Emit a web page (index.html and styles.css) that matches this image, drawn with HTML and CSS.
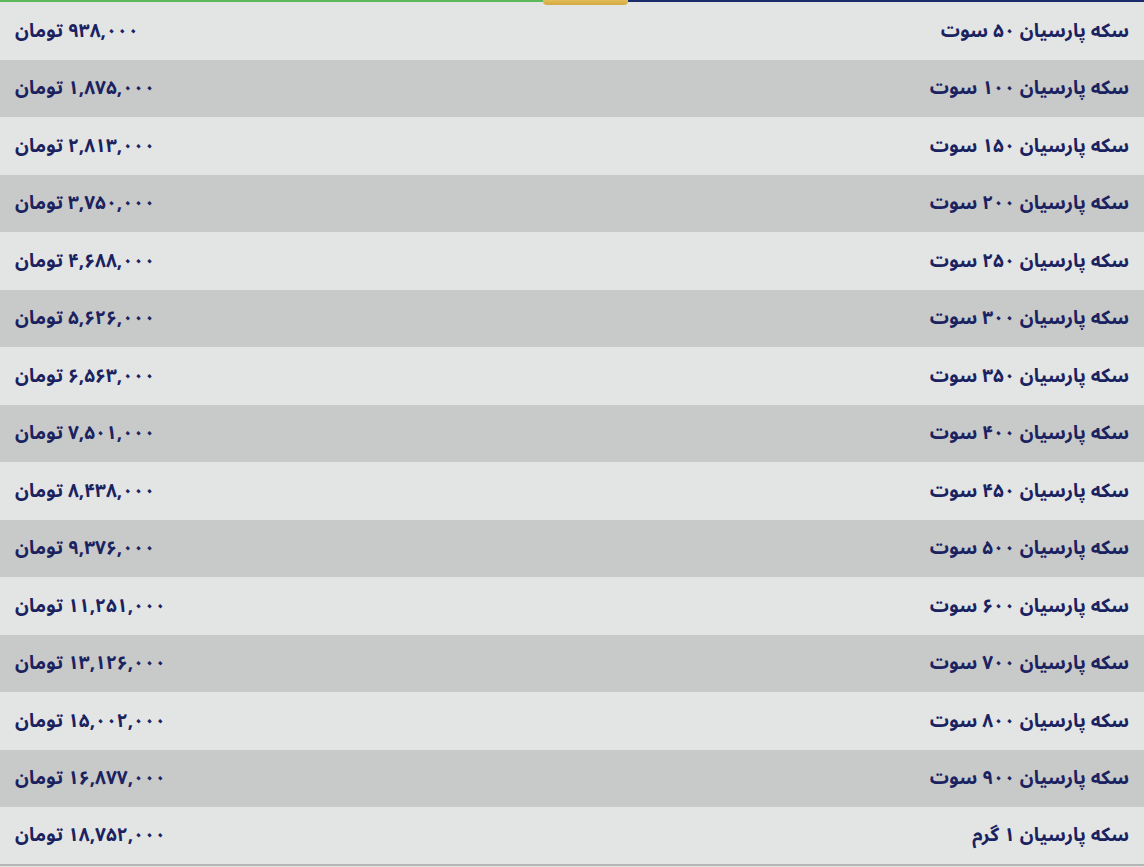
FILE: index.html
```html
<!DOCTYPE html>
<html lang="fa" dir="rtl">
<head>
<meta charset="utf-8">
<link rel="stylesheet" href="styles.css">
</head>
<body>
<div class="topbar">
  <div class="bar-navy"></div>
  <div class="bar-gold"></div>
  <div class="bar-green"></div>
</div>
<table class="prices">
  <tbody>
    <tr><td class="name">سکه پارسیان ۵۰ سوت</td><td class="price">۹۳۸,۰۰۰ تومان</td></tr>
    <tr><td class="name">سکه پارسیان ۱۰۰ سوت</td><td class="price">۱,۸۷۵,۰۰۰ تومان</td></tr>
    <tr><td class="name">سکه پارسیان ۱۵۰ سوت</td><td class="price">۲,۸۱۳,۰۰۰ تومان</td></tr>
    <tr><td class="name">سکه پارسیان ۲۰۰ سوت</td><td class="price">۳,۷۵۰,۰۰۰ تومان</td></tr>
    <tr><td class="name">سکه پارسیان ۲۵۰ سوت</td><td class="price">۴,۶۸۸,۰۰۰ تومان</td></tr>
    <tr><td class="name">سکه پارسیان ۳۰۰ سوت</td><td class="price">۵,۶۲۶,۰۰۰ تومان</td></tr>
    <tr><td class="name">سکه پارسیان ۳۵۰ سوت</td><td class="price">۶,۵۶۳,۰۰۰ تومان</td></tr>
    <tr><td class="name">سکه پارسیان ۴۰۰ سوت</td><td class="price">۷,۵۰۱,۰۰۰ تومان</td></tr>
    <tr><td class="name">سکه پارسیان ۴۵۰ سوت</td><td class="price">۸,۴۳۸,۰۰۰ تومان</td></tr>
    <tr><td class="name">سکه پارسیان ۵۰۰ سوت</td><td class="price">۹,۳۷۶,۰۰۰ تومان</td></tr>
    <tr><td class="name">سکه پارسیان ۶۰۰ سوت</td><td class="price">۱۱,۲۵۱,۰۰۰ تومان</td></tr>
    <tr><td class="name">سکه پارسیان ۷۰۰ سوت</td><td class="price">۱۳,۱۲۶,۰۰۰ تومان</td></tr>
    <tr><td class="name">سکه پارسیان ۸۰۰ سوت</td><td class="price">۱۵,۰۰۲,۰۰۰ تومان</td></tr>
    <tr><td class="name">سکه پارسیان ۹۰۰ سوت</td><td class="price">۱۶,۸۷۷,۰۰۰ تومان</td></tr>
    <tr><td class="name">سکه پارسیان ۱ گرم</td><td class="price">۱۸,۷۵۲,۰۰۰ تومان</td></tr>
  </tbody>
</table>
</body>
</html>
```
FILE: styles.css
```css
html, body {
  margin: 0;
  padding: 0;
  background: #e3e5e5;
}
body {
  font-family: "Noto Sans Arabic", "Vazirmatn", "DejaVu Sans", sans-serif;
  color: #1b2260;
  width: 1144px;
  height: 867px;
  overflow: hidden;
}
.topbar {
  display: flex;
  height: 2px;
  position: relative;
}
.bar-navy {
  flex: 0 0 516px;
  background: #1b2a6b;
}
.bar-green {
  flex: 1;
  background: #5cb85c;
}
.bar-gold {
  flex: 0 0 85px;
  background: linear-gradient(#e2bd5a, #d4a73e);
  height: 5px;
  border-radius: 0 0 4px 4px;
  position: relative;
  z-index: 2;
}
.prices {
  width: 100%;
  border-collapse: collapse;
  border-bottom: 2px solid #b5b7b7;
}
.prices tr {
  height: 57.5px;
  background: #e3e5e5;
}
.prices tr:nth-child(even) {
  background: #c8c9c9;
}
.prices td {
  padding: 0 15px;
  font-size: 19px;
  font-weight: 700;
  vertical-align: middle;
  white-space: nowrap;
}
.name {
  text-align: right;
}
.price {
  text-align: left;
}
```
